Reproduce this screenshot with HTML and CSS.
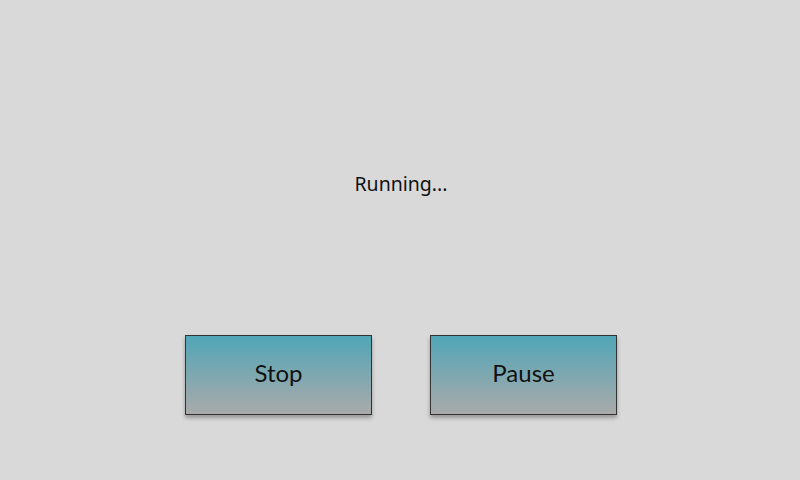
FILE: index.html
```html
<!DOCTYPE html>
<html>
<head>
<meta charset="utf-8">
<link rel="stylesheet" href="styles.css">
</head>
<body>
<div class="screen">
  <div class="status">Running...</div>
  <div class="actions">
    <button class="btn">Stop</button>
    <button class="btn">Pause</button>
  </div>
</div>
</body>
</html>
```
FILE: styles.css
```css
html, body {
  margin: 0;
  padding: 0;
  background: #d9d9d9;
}
.screen {
  width: 800px;
  height: 480px;
  display: flex;
  flex-direction: column;
  align-items: center;
  box-sizing: border-box;
  padding-top: 170px;
  padding-left: 2px;
}
.status {
  font-family: "Noto Sans", sans-serif;
  font-size: 19.5px;
  line-height: 28px;
  color: #111;
}
.actions {
  margin-top: 137px;
  display: flex;
  gap: 58px;
}
.btn {
  width: 187px;
  height: 80px;
  box-sizing: border-box;
  border: 1px solid #333;
  background: linear-gradient(to bottom, #51a6b7, #aaaaaa);
  box-shadow: 0 3px 4px rgba(0,0,0,0.3);
  font-family: "Lato", sans-serif;
  font-size: 24px;
  color: #111;
  padding: 0 0 5px 0;
  cursor: pointer;
}
```
